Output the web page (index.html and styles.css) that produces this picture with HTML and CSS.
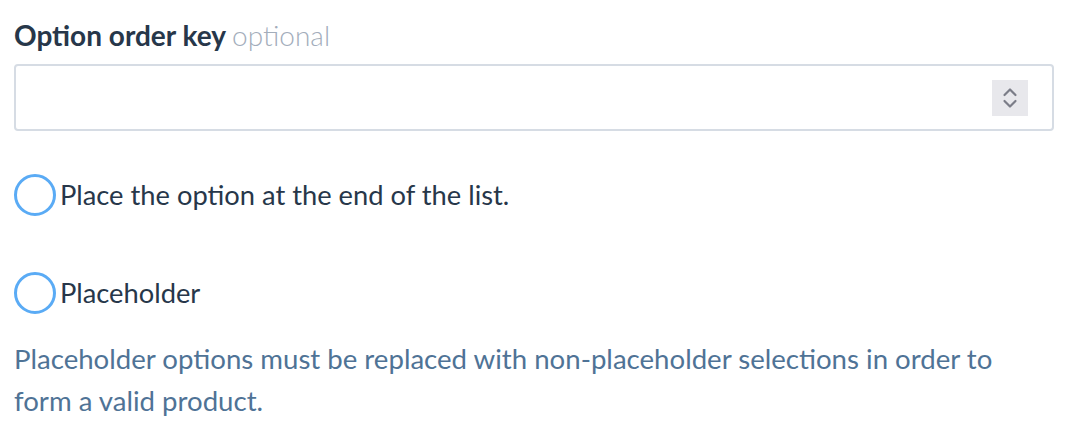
FILE: index.html
```html
<!DOCTYPE html>
<html>
<head>
<meta charset="utf-8">
<link rel="stylesheet" href="styles.css">
</head>
<body>
<div class="form">
  <label class="field-label">Option order key <span class="optional">optional</span></label>
  <div class="input">
    <span class="spinner">
      <svg width="16" height="24" viewBox="0 0 16 24"><path d="M2.5 9 L8 3.5 L13.5 9" fill="none" stroke="#7b7d88" stroke-width="2.2" stroke-linecap="round" stroke-linejoin="round"/><path d="M2.5 15 L8 20.5 L13.5 15" fill="none" stroke="#7b7d88" stroke-width="2.2" stroke-linecap="round" stroke-linejoin="round"/></svg>
    </span>
  </div>
  <div class="radio-row first"><span class="radio"></span><span class="radio-text">Place the option at the end of the list.</span></div>
  <div class="radio-row second"><span class="radio"></span><span class="radio-text">Placeholder</span></div>
  <p class="help">Placeholder options must be replaced with non-placeholder selections in order to form a valid product.</p>
</div>
</body>
</html>
```
FILE: styles.css
```css
html, body { margin: 0; padding: 0; background: #fff; }
body { font-family: Lato, "Open Sans", sans-serif; }
.form { padding: 16px 16px 0 14px; width: 1040px; }
.field-label { display: block; font-size: 28px; font-weight: 700; color: #27374a; line-height: 38px; }
.optional { font-weight: 300; color: #a3adbb; }
.input { margin-top: 10px; height: 63px; border: 2px solid #d6dce4; border-radius: 4px; display: flex; align-items: center; justify-content: flex-end; padding-right: 24px; box-sizing: content-box; }
.spinner { width: 36px; height: 36px; background: #e8e8ec; display: flex; align-items: center; justify-content: center; }
.radio-row { display: flex; align-items: center; gap: 4px; }
.radio-row.first { margin-top: 43px; }
.radio-row.second { margin-top: 56px; }
.radio { width: 36px; height: 36px; border: 3px solid #5aabf5; border-radius: 50%; flex: none; }
.radio-text { font-size: 27.3px; color: #27374a; line-height: 40px; }
.help { margin: 24px 0 0; font-size: 27.6px; line-height: 42px; color: #4f7396; }
```
